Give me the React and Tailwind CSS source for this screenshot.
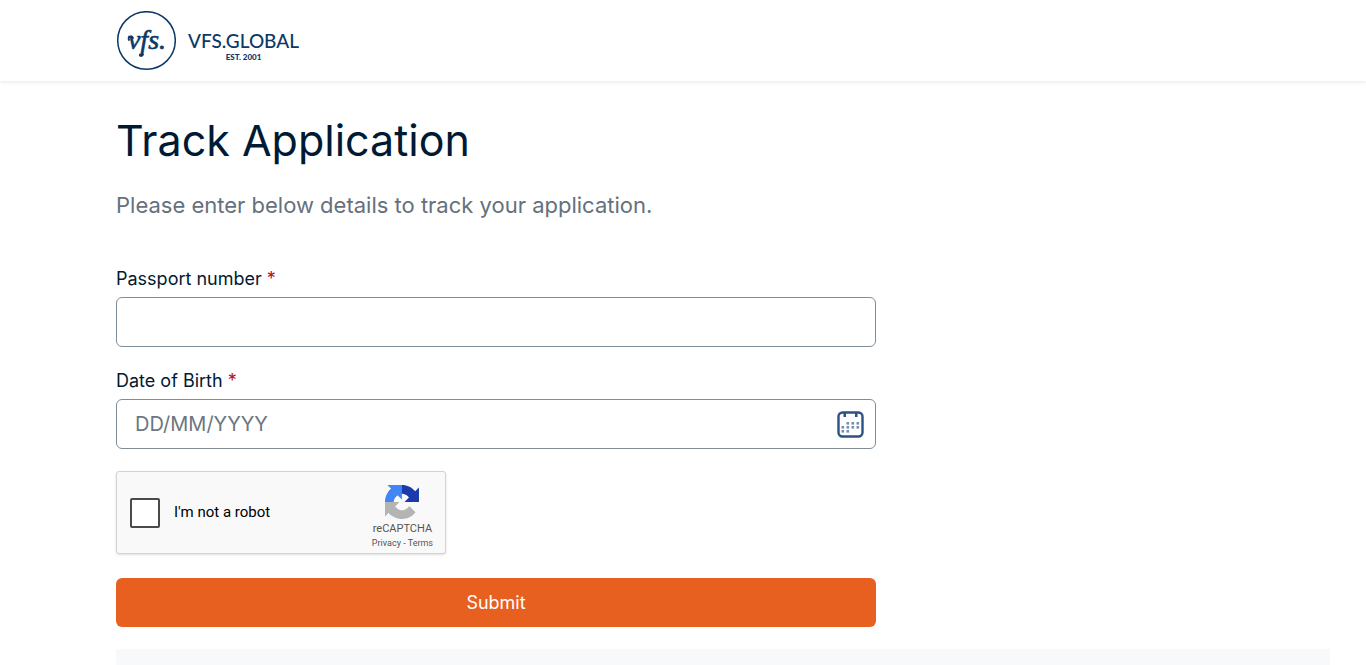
import clsx from 'clsx'

const Logo = () => (
  <a href="#home" aria-label="VFS.Global home" className="flex items-center gap-3 font-['Lato',sans-serif] text-[#0b3868]">
    <svg viewBox="0 0 60 60" className="h-15 w-15">
      <circle cx="30.5" cy="29.5" r="28.8" fill="none" stroke="currentColor" strokeWidth="1.5" />
      <text
        x="31"
        y="38"
        textAnchor="middle"
        fill="currentColor"
        stroke="currentColor"
        strokeWidth="0.6"
        className="font-['Liberation_Serif',serif] text-[28px] italic"
      >
        vfs.
      </text>
      {/* swash leading into the wordmark and the curl under it */}
      <path
        d="M17 27c-1.500-3-5.500-1-4 2M24 43.500c-1 2 2 2 3 0"
        fill="none"
        stroke="currentColor"
        strokeWidth="1.8"
        strokeLinecap="round"
      />
    </svg>
    <span className="flex flex-col items-center pt-3">
      <span className="text-[19px] leading-5 font-medium">VFS.GLOBAL</span>
      <span className="text-[8px] leading-3 font-black">EST. 2001</span>
    </span>
  </a>
)

const CalendarIcon = () => (
  <svg viewBox="0 0 28 28" className="h-7 w-7 text-[#2d5180]" fill="currentColor">
    <rect x="2.5" y="2.5" width="24" height="24" rx="4" fill="none" stroke="currentColor" strokeWidth="2.4" />
    <path d="M7.500 2h2.500v5h-2.500zM19 2h2.500v5h-2.500z" />
    {[12, 16, 20].map((y, row) =>
      [5.5, 10.5, 15.5, 20.5].map((x, col) => {
        // first and last days of the month leave a gap in the grid
        if ((row === 0 && col === 0) || (row === 2 && col > 1)) return null
        return <rect key={`${x}-${y}`} x={x} y={y} width="2.6" height="2.6" opacity="0.65" />
      })
    )}
  </svg>
)

const RecaptchaLogo = () => (
  <svg viewBox="0 0 64 64" className="h-[34px] w-[34px]">
    <path fill="#1c3aa9" d="M64 31.955l-.033-1.37V4.687l-7.16 7.16C50.948 4.674 42.033.093 32.05.093c-10.4 0-19.622 4.96-25.458 12.64l11.736 11.86a15.55 15.55 0 0 1 4.754-5.334c2.05-1.6 4.952-2.906 8.968-2.906.485 0 .86.057 1.135.163 4.976.393 9.288 3.14 11.828 7.124l-8.307 8.307L64 31.953" />
    <path fill="#4285f4" d="M31.862.094l-1.37.033H4.594l7.16 7.16C4.58 13.147 0 22.06 0 32.046c0 10.4 4.96 19.622 12.64 25.458L24.5 45.768a15.55 15.55 0 0 1-5.334-4.754c-1.6-2.05-2.906-4.952-2.906-8.968 0-.485.057-.86.163-1.135.393-4.976 3.14-9.288 7.124-11.828l8.307 8.307L31.86.095" />
    <path fill="#b4b4b4" d="M.001 32.045l.033 1.37v25.898l7.16-7.16c5.86 7.173 14.774 11.754 24.76 11.754 10.4 0 19.622-4.96 25.458-12.64l-11.736-11.86a15.55 15.55 0 0 1-4.754 5.334c-2.05 1.6-4.952 2.906-8.968 2.906-.485 0-.86-.057-1.135-.163-4.976-.393-9.288-3.14-11.828-7.124l8.307-8.307c-10.522.04-22.4.066-27.295-.005" />
  </svg>
)

const Field = ({ id, label, placeholder, children }) => (
  <div className="mb-5">
    <label htmlFor={id} className="mb-1 block text-[18px] leading-7">
      {label} <span className="text-[#b5121b]">*</span>
    </label>
    <div className="relative">
      <input
        id={id}
        type="text"
        required
        placeholder={placeholder}
        className={clsx(
          'block h-[50px] w-full rounded-md border border-[#7f8e99] bg-white px-[18px] text-[20px] placeholder:text-[#6b7680]',
          children && 'pr-14'
        )}
      />
      {children}
    </div>
  </div>
)

const Recaptcha = () => (
  <div className="mt-[22px] mb-6 flex h-[83px] w-[330px] items-center justify-between rounded-[3px] border border-[#d3d3d3] bg-[#f9f9f9] pr-3 pl-[13px] font-['Roboto',sans-serif] shadow-sm">
    <label className="flex items-center gap-[14px] text-[15px] text-black">
      <input
        type="checkbox"
        className="h-[30px] w-[30px] appearance-none rounded-[2px] border-2 border-[#4a4a4a] bg-white"
      />
      I'm not a robot
    </label>
    <div className="flex flex-col items-center pt-[6px] text-[#555555]">
      <RecaptchaLogo />
      <span className="text-[11px] leading-5">reCAPTCHA</span>
      <span className="text-[9px] leading-2">
        <a href="#privacy">Privacy</a> - <a href="#terms">Terms</a>
      </span>
    </div>
  </div>
)

const App = () => {
  return (
    <div className="min-h-screen bg-white font-['Inter',sans-serif] text-[#001a33]">
      <header className="flex h-[81px] items-center pl-[116px] shadow-[0_1px_4px_rgba(0,0,0,0.1)]">
        <Logo />
      </header>

      <main className="pt-8 pr-9 pl-[116px]">
        <form className="max-w-[760px]" onSubmit={(e) => e.preventDefault()}>
          <h1 className="mb-6 text-[43px] leading-[54px]">Track Application</h1>
          <p className="mb-[46px] text-[22px] leading-7 text-[#64717d]">
            Please enter below details to track your application.
          </p>

          <Field id="passport" label="Passport number" />
          <Field id="dob" label="Date of Birth" placeholder="DD/MM/YYYY">
            <button type="button" aria-label="Choose date" className="absolute top-[11px] right-3">
              <CalendarIcon />
            </button>
          </Field>

          <Recaptcha />

          <button
            type="submit"
            className="block h-[49px] w-full rounded-md bg-[#e86020] text-[18px] text-white"
          >
            Submit
          </button>
        </form>

        <div className="mt-[22px] h-4 bg-[#f8f9fb]" />
      </main>
    </div>
  )
}

export default App
